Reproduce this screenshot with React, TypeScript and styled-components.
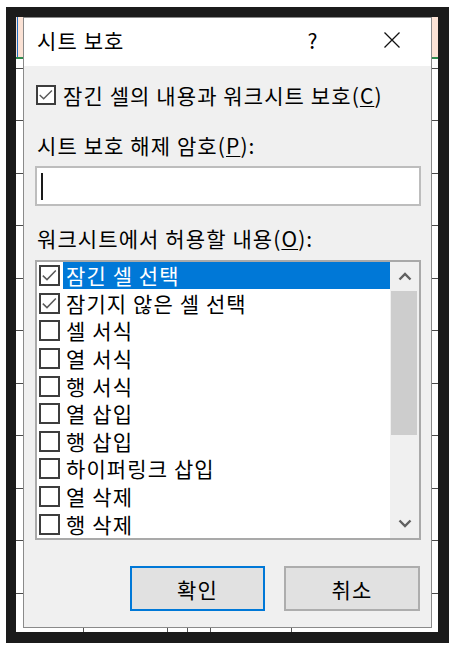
import React from "react";
import styled, { createGlobalStyle } from "styled-components";

const GlobalStyle = createGlobalStyle`
  html, body { margin: 0; padding: 0; background: #ffffff; }
  body {
    font-family: "Noto Sans CJK KR", "Noto Sans", sans-serif;
    color: #000;
  }
  #root { width: 456px; height: 649px; }
`;

const FONT = 21;

const Frame = styled.div`
  margin: 7px 0 0 6px;
  width: 443px;
  height: 636px;
  box-sizing: border-box;
  background: #1b1b1b;
  padding: 10px 11px 11px 10px;
  display: flex;
`;

const Sheet = styled.div`
  flex: 1;
  display: flex;
  padding: 0 6px 4px 7px;
  background:
    linear-gradient(#1f6fc4, #1f6fc4) 1px 0 / 1px 40px no-repeat,
    linear-gradient(#2e8b4e, #2e8b4e) 0 40px / 100% 2px no-repeat,
    linear-gradient(#fbe2d5, #fbe2d5) 0 0 / 100% 40px no-repeat,
    linear-gradient(#555, #555) 67px 100% / 1px 4px no-repeat,
    linear-gradient(#555, #555) 151px 100% / 1px 4px no-repeat,
    linear-gradient(#555, #555) 171px 100% / 1px 4px no-repeat,
    linear-gradient(#555, #555) 194px 100% / 1px 4px no-repeat,
    linear-gradient(#555, #555) 275px 100% / 1px 4px no-repeat,
    repeating-linear-gradient(
      to bottom,
      transparent 0,
      transparent 51px,
      #4a4a4a 51px,
      #4a4a4a 52px,
      transparent 52px,
      transparent 52.5px
    ),
    #ffffff;
`;

const Dialog = styled.div`
  flex: 1;
  display: flex;
  flex-direction: column;
  background: #f0f0f0;
  border: 1px solid #8a8a8a;
  box-sizing: border-box;
  font-size: ${FONT}px;
  letter-spacing: 1.1px;
`;

const TitleBar = styled.div`
  height: 48px;
  background: #ffffff;
  display: flex;
  align-items: center;
  padding-left: 13px;
`;

const TitleText = styled.div`
  flex: 1;
  line-height: 28px;
  margin-top: -5px;
`;

const TitleButton = styled.div<{ $gap: number }>`
  width: 46px;
  height: 46px;
  display: flex;
  align-items: center;
  justify-content: center;
  margin-right: ${(p) => p.$gap}px;
  margin-top: -4px;
  line-height: 28px;
`;

const Body = styled.div`
  flex: 1;
  display: flex;
  flex-direction: column;
  padding: 0 10px 0 11px;
`;

const TopCheckRow = styled.div`
  display: flex;
  align-items: center;
  height: 28px;
  margin-top: 15px;
  padding-left: 1px;
  gap: 7px;
  white-space: nowrap;
`;

const Label = styled.div<{ $mt: number }>`
  line-height: 28px;
  height: 28px;
  padding-left: 2px;
  margin-top: ${(p) => p.$mt}px;
  white-space: nowrap;
`;

const Mnemonic = styled.span`
  text-decoration: underline;
  text-underline-offset: 2px;
  text-decoration-thickness: 1px;
`;

const Box = styled.span<{ $size: number }>`
  width: ${(p) => p.$size}px;
  height: ${(p) => p.$size}px;
  box-sizing: border-box;
  border: 2px solid #3d3d3d;
  background: #ffffff;
  display: flex;
  flex-shrink: 0;
`;

const PasswordInput = styled.div`
  margin-top: 7px;
  height: 40px;
  box-sizing: border-box;
  border: 2px solid #bdbdbd;
  background: #ffffff;
  display: flex;
  align-items: center;
  padding-left: 4px;
`;

const Caret = styled.span`
  width: 2px;
  height: 27px;
  background: #1a1a1a;
`;

const ListBox = styled.div`
  margin-top: 8px;
  height: 280px;
  box-sizing: border-box;
  border: 2px solid #a9a9a9;
  background: #ffffff;
  display: flex;
`;

const Items = styled.div`
  flex: 1;
  display: flex;
  flex-direction: column;
`;

const Item = styled.div`
  height: 27.6px;
  flex-shrink: 0;
  display: flex;
  align-items: center;
  padding-left: 2px;
`;

const ItemText = styled.span<{ $selected: boolean }>`
  margin-left: 3px;
  line-height: 27px;
  padding-left: 3px;
  flex: ${(p) => (p.$selected ? 1 : "0 0 auto")};
  background: ${(p) => (p.$selected ? "#0078d7" : "transparent")};
  color: ${(p) => (p.$selected ? "#ffffff" : "#000000")};
  white-space: nowrap;
`;

const ScrollBar = styled.div`
  width: 29px;
  background: #f0f0f0;
  display: flex;
  flex-direction: column;
`;

const ScrollArrow = styled.div`
  height: 29px;
  display: flex;
  align-items: center;
  justify-content: center;
`;

const Thumb = styled.div`
  height: 144px;
  margin: 0 2px 0 1px;
  background: #cdcdcd;
`;

const Track = styled.div`
  flex: 1;
`;

const ButtonRow = styled.div`
  margin-top: 26px;
  display: flex;
  justify-content: flex-end;
  gap: 19px;
  padding-right: 1px;
`;

const Button = styled.div<{ $primary?: boolean; $w: number }>`
  width: ${(p) => p.$w}px;
  height: 45px;
  box-sizing: border-box;
  background: #e1e1e1;
  border: 2px solid ${(p) => (p.$primary ? "#0078d7" : "#adadad")};
  display: flex;
  align-items: center;
  justify-content: center;
  line-height: 28px;
`;

const CheckMark = () => (
  <svg width="100%" height="100%" viewBox="0 0 17 17">
    <polyline
      points="1.8,8.6 6,12.6 14.8,3.6"
      fill="none"
      stroke="#5a5a5a"
      strokeWidth="1.5"
    />
  </svg>
);

const CheckBox = ({ checked, size }: { checked: boolean; size: number }) => (
  <Box $size={size}>{checked && <CheckMark />}</Box>
);

const Chevron = ({ up }: { up: boolean }) => (
  <svg width="14" height="9" viewBox="0 0 14 9">
    <polyline
      points={up ? "1.5,7.5 7,2 12.5,7.5" : "1.5,1.5 7,7 12.5,1.5"}
      fill="none"
      stroke="#606060"
      strokeWidth="2.4"
    />
  </svg>
);

const CloseIcon = () => (
  <svg width="16" height="16" viewBox="0 0 16 16">
    <path d="M0.5 0.5 L15.5 15.5 M15.5 0.5 L0.5 15.5" stroke="#111" strokeWidth="1.3" fill="none" />
  </svg>
);

const items = [
  { label: "잠긴 셀 선택", checked: true },
  { label: "잠기지 않은 셀 선택", checked: true },
  { label: "셀 서식", checked: false },
  { label: "열 서식", checked: false },
  { label: "행 서식", checked: false },
  { label: "열 삽입", checked: false },
  { label: "행 삽입", checked: false },
  { label: "하이퍼링크 삽입", checked: false },
  { label: "열 삭제", checked: false },
  { label: "행 삭제", checked: false },
];

export default function App() {
  return (
    <>
      <GlobalStyle />
      <Frame>
        <Sheet>
          <Dialog>
            <TitleBar>
              <TitleText>시트 보호</TitleText>
              <TitleButton $gap={33}>?</TitleButton>
              <TitleButton $gap={16}>
                <CloseIcon />
              </TitleButton>
            </TitleBar>
            <Body>
              <TopCheckRow>
                <CheckBox checked size={20} />
                <span>
                  잠긴 셀의 내용과 워크시트 보호(<Mnemonic>C</Mnemonic>)
                </span>
              </TopCheckRow>
              <Label $mt={22}>
                시트 보호 해제 암호(<Mnemonic>P</Mnemonic>):
              </Label>
              <PasswordInput>
                <Caret />
              </PasswordInput>
              <Label $mt={18}>
                워크시트에서 허용할 내용(<Mnemonic>O</Mnemonic>):
              </Label>
              <ListBox>
                <Items>
                  {items.map((it, i) => (
                    <Item key={it.label}>
                      <CheckBox checked={it.checked} size={21} />
                      <ItemText $selected={i === 0}>{it.label}</ItemText>
                    </Item>
                  ))}
                </Items>
                <ScrollBar>
                  <ScrollArrow>
                    <Chevron up />
                  </ScrollArrow>
                  <Thumb />
                  <Track />
                  <ScrollArrow>
                    <Chevron up={false} />
                  </ScrollArrow>
                </ScrollBar>
              </ListBox>
              <ButtonRow>
                <Button $primary $w={135}>
                  확인
                </Button>
                <Button $w={136}>취소</Button>
              </ButtonRow>
            </Body>
          </Dialog>
        </Sheet>
      </Frame>
    </>
  );
}
